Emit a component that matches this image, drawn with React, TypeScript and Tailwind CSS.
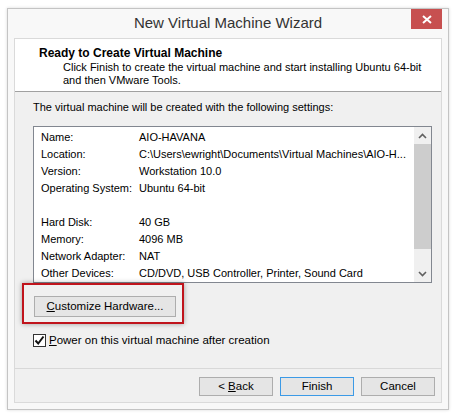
import React from "react";

const rows: [string, string][] = [
  ["Name:", "AIO-HAVANA"],
  ["Location:", "C:\\Users\\ewright\\Documents\\Virtual Machines\\AIO-H..."],
  ["Version:", "Workstation 10.0"],
  ["Operating System:", "Ubuntu 64-bit"],
  ["", ""],
  ["Hard Disk:", "40 GB"],
  ["Memory:", "4096 MB"],
  ["Network Adapter:", "NAT"],
  ["Other Devices:", "CD/DVD, USB Controller, Printer, Sound Card"],
];

function Btn({ children, primary }: { children: React.ReactNode; primary?: boolean }) {
  return (
    <div
      className={`w-[74px] h-[19px] flex items-center justify-center border bg-[#e5e5e5] text-[11.5px] leading-none text-black ${
        primary ? "border-[#3c9ae6]" : "border-[#adadad]"
      }`}
    >
      {children}
    </div>
  );
}

export default function App() {
  return (
    <div
      className="w-[457px] h-[419px] bg-white pt-[8px] pl-[7px] text-black"
      style={{ fontFamily: '"Segoe UI", "Liberation Sans", Arial, sans-serif' }}
    >
      <div className="relative w-[442px] h-[402px] border border-[#c4c4c4] bg-[#f8f8f8] shadow-[0_0_3px_rgba(0,0,0,0.15)] px-[6px] flex flex-col">
        <div className="h-[29px] flex items-center justify-center text-[15px] text-[#333] pb-[1px]">
          New Virtual Machine Wizard
        </div>
        <div className="absolute top-[0px] right-[6px] w-[31px] h-[20px] bg-[#c75050] flex items-center justify-center">
          <svg width="10" height="9" viewBox="0 0 10 9">
            <path d="M1 1 L9 8 M9 1 L1 8" stroke="white" strokeWidth="2" />
          </svg>
        </div>
        <div className="h-[365px] border border-[#dadada] flex flex-col">
          <div className="h-[53px] shrink-0 bg-white pl-[24px] pt-[7px] border-b border-[#a0a0a0] overflow-hidden">
            <div className="font-bold text-[12px] leading-[15px]">Ready to Create Virtual Machine</div>
            <div className="pl-[24px] text-[11px] leading-[13px] whitespace-nowrap">
              Click Finish to create the virtual machine and start installing Ubuntu 64-bit
              <br />
              and then VMware Tools.
            </div>
          </div>
          <div className="flex-1 bg-[#f0f0f0] flex flex-col">
            <div className="pl-[18px] pt-[8px] text-[11px] leading-[15px]">
              The virtual machine will be created with the following settings:
            </div>
            <div className="ml-[18px] mt-[11px] w-[399px] h-[157px] border border-[#828790] bg-white flex">
              <div className="flex-1 pl-[7px] pt-[2px]">
                {rows.map(([k, v], i) => (
                  <div key={i} className="flex h-[17px] items-center text-[11px] leading-none whitespace-nowrap">
                    <div className="w-[98px]">{k}</div>
                    <div>{v}</div>
                  </div>
                ))}
              </div>
              <div className="w-[17px] bg-[#f0f0f0] flex flex-col">
                <div className="h-[17px] flex items-center justify-center">
                  <svg width="9" height="6" viewBox="0 0 9 6">
                    <path d="M1 5 L4.5 1.5 L8 5" stroke="#606060" strokeWidth="1.6" fill="none" />
                  </svg>
                </div>
                <div className="h-[105px] bg-[#cdcdcd]" />
                <div className="flex-1" />
                <div className="h-[17px] flex items-center justify-center">
                  <svg width="9" height="6" viewBox="0 0 9 6">
                    <path d="M1 1 L4.5 4.5 L8 1" stroke="#606060" strokeWidth="1.6" fill="none" />
                  </svg>
                </div>
              </div>
            </div>
            <div className="ml-[7px] w-[162px] h-[41px] border-2 border-[#c0141c] shadow-[0_0_5px_rgba(0,0,0,0.35)] pl-[10px] pt-[11px]">
              <div className="w-[142px] h-[21px] border border-[#adadad] bg-[#e5e5e5] flex items-center justify-center text-[11.5px] leading-none">
                <span>
                  <span className="underline">C</span>ustomize Hardware...
                </span>
              </div>
            </div>
            <div className="ml-[18px] mt-[9px] flex items-center gap-[3px] text-[11.5px] leading-[15px]">
              <div className="w-[13px] h-[13px] border border-[#333] bg-white flex items-center justify-center">
                <svg width="11" height="11" viewBox="0 0 11 11">
                  <path d="M1.5 5.5 L4.2 8.5 L9.5 1.5" stroke="#111" strokeWidth="2" fill="none" />
                </svg>
              </div>
              <span>
                <span className="underline">P</span>ower on this virtual machine after creation
              </span>
            </div>
            <div className="flex-1" />
            <div className="border-t border-[#d8d8d8] pt-[8px] pb-[6px] pr-[6px] flex justify-end gap-[7px]">
              <Btn>
                &lt; <span className="underline ml-[3px]">B</span>ack
              </Btn>
              <Btn primary>Finish</Btn>
              <Btn>Cancel</Btn>
            </div>
          </div>
        </div>
      </div>
    </div>
  );
}
